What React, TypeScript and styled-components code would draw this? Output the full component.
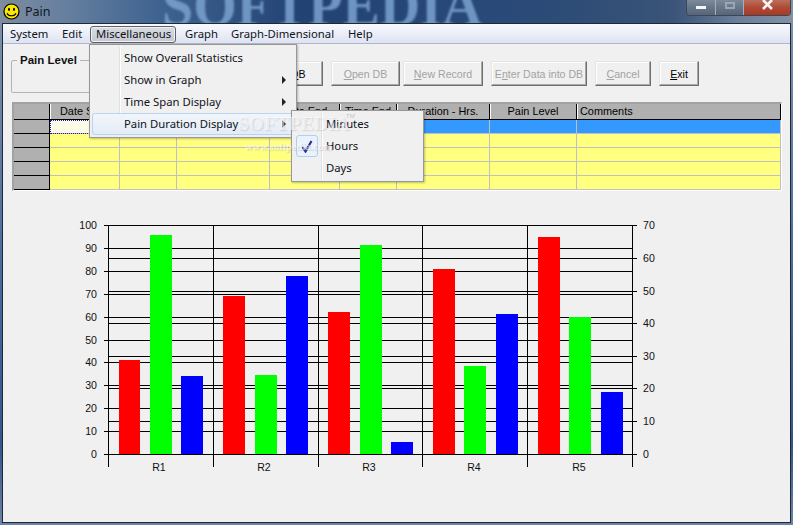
import React from "react";
import styled, { createGlobalStyle } from "styled-components";

const Global = createGlobalStyle`
  html, body { margin: 0; padding: 0; background: #f0f0f0; }
  #root { width: 793px; height: 525px; }
`;

const uiFont = `"Noto Sans", "Liberation Sans", sans-serif`;
const ctlFont = `"Liberation Sans", Arial, sans-serif`;

const Win = styled.div`
  position: relative;
  width: 793px;
  height: 525px;
  overflow: hidden;
  display: flex;
  flex-direction: column;
  background: linear-gradient(180deg, #8094ac 0%, #4f6f9e 45%, #34568a 85%, #6d84a6 100%);
`;

const TitleBar = styled.div`
  position: relative;
  flex: 0 0 23px;
  height: 23px;
  display: flex;
  align-items: center;
  padding-left: 3px;
  overflow: hidden;
  background: linear-gradient(90deg, #7d8c9f 0%, #66809f 8%, #3f6390 20%, #224273 38%, #28487a 58%, #2d4c76 72%, #3b5478 85%, #6b7f98 93%, #8292a5 100%);
`;

const TitleWatermark = styled.span`
  position: absolute;
  left: 162px;
  top: -26px;
  font: bold 56px "Liberation Serif", serif;
  color: #7ba3cf;
  opacity: 0.85;
  filter: blur(1.2px);
  white-space: nowrap;
`;

const AppIcon = styled.svg`
  position: relative;
  width: 17px;
  height: 17px;
  margin-right: 5px;
`;

const TitleText = styled.span`
  position: relative;
  font: 12.5px ${uiFont};
  color: #10161f;
`;

const WinControls = styled.div`
  position: relative;
  margin-left: auto;
  margin-right: 2px;
  align-self: flex-start;
  display: flex;
  height: 15px;
  border: 1px solid #3b4656;
  border-top: none;
  border-radius: 0 0 4px 4px;
  overflow: hidden;
`;

const CtlBtn = styled.div<{ $w: number; $red?: boolean }>`
  width: ${(p) => p.$w}px;
  display: flex;
  align-items: flex-start;
  justify-content: center;
  border-left: 1px solid #a6b0bd;
  &:first-child { border-left: none; }
  background: ${(p) =>
    p.$red
      ? "linear-gradient(180deg, #b9705f 0%, #b04a34 50%, #a83a24 100%)"
      : "linear-gradient(180deg, #7d8a9b 0%, #667588 50%, #56657a 100%)"};
`;

const MinGlyph = styled.i`
  display: block;
  width: 10px;
  height: 3px;
  margin-top: 6px;
  background: #f4f6f8;
`;

const MaxGlyph = styled.i`
  display: block;
  width: 6px;
  height: 3px;
  margin-top: 2px;
  border: 2px solid #9aa6b4;
`;

const CloseGlyph = styled.svg`
  width: 11px;
  height: 10px;
`;

const Client = styled.div`
  flex: 1;
  margin: 0 2px 2px;
  border: 1px solid #1d2838;
  background: #f0f0f0;
  display: flex;
  flex-direction: column;
  min-height: 0;
`;

const MenuBar = styled.div`
  flex: 0 0 20px;
  box-sizing: border-box;
  display: flex;
  align-items: flex-start;
  padding: 2px 0 0 1px;
  border-bottom: 1px solid #b2b6cc;
  background: linear-gradient(180deg, #f8f9fc 0%, #f0f3fa 30%, #dfe3f2 100%);
`;

const MenuItem = styled.div<{ $w: number; $open?: boolean }>`
  box-sizing: border-box;
  width: ${(p) => p.$w}px;
  height: 17px;
  padding-left: 6px;
  margin-right: ${(p) => (p.$open ? 3 : 0)}px;
  font: 11.3px/16px ${uiFont};
  color: #10131a;
  white-space: nowrap;
  ${(p) =>
    p.$open
      ? `border: 1px solid #5d6068; border-radius: 3px; padding-left: 5px; line-height: 14px;
         background: linear-gradient(180deg, #d9dbe2, #c6c8d0);
         box-shadow: inset 0 0 0 1px #eef0f4;`
      : ""}
`;

const Toolbar = styled.div`
  flex: 0 0 58px;
  display: flex;
  align-items: flex-start;
  padding: 16px 0 0 8px;
  box-sizing: border-box;
`;

const GroupBox = styled.fieldset`
  box-sizing: border-box;
  width: 241px;
  height: 33px;
  margin: 0;
  padding: 0;
  border: 1px solid #b4b4b4;
  border-radius: 2px;
  position: relative;
`;

const GroupLabel = styled.span`
  position: absolute;
  left: 5px;
  top: -8px;
  padding: 0 3px;
  background: #f0f0f0;
  font: bold 11.5px/14px ${ctlFont};
  color: #111;
`;

const ButtonRow = styled.div`
  display: flex;
  margin-top: 1px;
`;

const Btn = styled.div<{ $w: number; $gap: number; $off?: boolean }>`
  box-sizing: border-box;
  width: ${(p) => p.$w}px;
  height: 25px;
  margin-left: ${(p) => p.$gap}px;
  display: flex;
  align-items: center;
  justify-content: center;
  white-space: nowrap;
  font: 10.6px ${ctlFont};
  color: ${(p) => (p.$off ? "#a2a2a2" : "#000")};
  background: #f0f0f0;
  border-top: 1px solid #e4e4e4;
  border-left: 1px solid #e4e4e4;
  border-right: 1px solid #6e6e6e;
  border-bottom: 1px solid #6e6e6e;
  box-shadow: inset -1px -1px 0 #a8a8a8, inset 1px 1px 0 #fff;
`;

const COLS = "36px 70px 57px 93px 70px 57px 93px 87px 1fr";

const DataGrid = styled.div`
  flex: 0 0 auto;
  margin-left: 9px;
  width: 770px;
  box-sizing: border-box;
  border-top: 2px solid #a2a2a2;
  border-left: 2px solid #a2a2a2;
  border-right: 1px solid #fff;
  border-bottom: 1px solid #fff;
  display: grid;
  grid-template-columns: ${COLS};
  grid-auto-rows: 14px;
  grid-template-rows: 16px;
  height: 89px;
`;

const HeadCell = styled.div<{ $left?: boolean }>`
  box-sizing: border-box;
  background: #b0b0b0;
  border-bottom: 1px solid #000;
  border-right: 1px solid #000;
  box-shadow: inset 1px 0 0 #fff;
  font: 10.9px/15px ${ctlFont};
  color: #000;
  white-space: nowrap;
  overflow: hidden;
  text-align: ${(p) => (p.$left ? "left" : "center")};
  padding-left: ${(p) => (p.$left ? 3 : 0)}px;
  &:first-child { box-shadow: none; }
  &:last-child { border-right: none; }
`;

const RowHead = styled.div`
  box-sizing: border-box;
  background: #b0b0b0;
  border-bottom: 1px solid #000;
  border-right: 1px solid #000;
`;

const Cell = styled.div<{ $sel?: boolean; $focus?: boolean }>`
  box-sizing: border-box;
  background: ${(p) => (p.$focus ? "#fbfbe6" : p.$sel ? "#3399ff" : "#ffff80")};
  border-bottom: 1px solid #c0c0c0;
  border-right: 1px solid #c0c0c0;
  ${(p) => (p.$focus ? "outline: 1px dotted #1a1ab0; outline-offset: -1px;" : "")}
`;

const ChartSvg = styled.svg`
  display: block;
  width: 787px;
  height: 320px;
  text {
    font: 10.6px ${ctlFont};
    fill: #111;
  }
`;

const Popup = styled.div<{ $x: number; $y: number; $w: number; $sep: number }>`
  position: absolute;
  left: ${(p) => p.$x}px;
  top: ${(p) => p.$y}px;
  width: ${(p) => p.$w}px;
  box-sizing: border-box;
  padding: 2px;
  background: #f0f0f0;
  border: 1px solid #979797;
  box-shadow: 1px 1px 2px rgba(0, 0, 0, 0.25);
  &::before {
    content: "";
    position: absolute;
    top: 2px;
    bottom: 2px;
    left: ${(p) => p.$sep}px;
    width: 1px;
    background: #e0e0e0;
    box-shadow: 1px 0 0 #fff;
  }
`;

const PopItem = styled.div<{ $pad: number; $hot?: boolean }>`
  position: relative;
  box-sizing: border-box;
  height: 22px;
  padding-left: ${(p) => p.$pad}px;
  font: 11.3px/21px ${uiFont};
  color: #10131a;
  white-space: nowrap;
  border-radius: 3px;
  ${(p) =>
    p.$hot
      ? `background: linear-gradient(180deg, #f2f6fb, #e2ebf6); box-shadow: inset 0 0 0 1px #b9d3f2;`
      : ""}
`;

const Arrow = styled.i`
  position: absolute;
  right: 8px;
  top: 7px;
  width: 0;
  height: 0;
  border-left: 4px solid #222;
  border-top: 4px solid transparent;
  border-bottom: 4px solid transparent;
`;

const CheckBox = styled.span`
  position: absolute;
  left: 2px;
  top: 0;
  width: 22px;
  height: 22px;
  box-sizing: border-box;
  display: flex;
  align-items: center;
  justify-content: center;
  border: 1px solid #aecff7;
  border-radius: 3px;
  background: #eaf2fb;
`;

const WmBig = styled.span`
  position: absolute;
  left: 238px;
  top: 113px;
  font: bold 19.5px "Liberation Serif", serif;
  color: rgba(255, 255, 255, 0.55);
  text-shadow: 1px 1px 1px rgba(120, 120, 120, 0.22);
  white-space: nowrap;
  pointer-events: none;
`;

const WmTm = styled.span`
  position: absolute;
  left: 346px;
  top: 113px;
  font: 6px "Liberation Sans", sans-serif;
  color: rgba(170, 170, 170, 0.7);
  pointer-events: none;
`;

const WmSmall = styled.span`
  position: absolute;
  left: 245px;
  top: 141px;
  font: bold 10.5px "Liberation Serif", serif;
  color: rgba(255, 255, 255, 0.6);
  text-shadow: 1px 1px 1px rgba(120, 120, 120, 0.25);
  white-space: nowrap;
  pointer-events: none;
`;

const menus = [
  { t: "System", w: 52 },
  { t: "Edit", w: 34 },
  { t: "Miscellaneous", w: 86, open: true },
  { t: "Graph", w: 46 },
  { t: "Graph-Dimensional", w: 117 },
  { t: "Help", w: 40 },
];

const heads = ["Date Start", "Time Start", "", "Date End", "Time End", "Duration - Hrs.", "Pain Level"];

const leftY = [225, 248, 271, 294, 317, 340, 362, 385, 408, 431, 454];
const rightY = [258, 291, 323, 356, 388, 421];
const rightLabels = [
  { v: 70, y: 225 },
  { v: 60, y: 258 },
  { v: 50, y: 291 },
  { v: 40, y: 323 },
  { v: 30, y: 356 },
  { v: 20, y: 388 },
  { v: 10, y: 421 },
  { v: 0, y: 454 },
];
const vLines = [108, 213, 318, 422, 527, 632];
const bars = [
  { x: 119, w: 21, y: 360, c: "#ff0000" },
  { x: 150, w: 22, y: 235, c: "#00ff00" },
  { x: 181, w: 22, y: 376, c: "#0000ff" },
  { x: 223, w: 22, y: 296, c: "#ff0000" },
  { x: 255, w: 22, y: 375, c: "#00ff00" },
  { x: 286, w: 22, y: 276, c: "#0000ff" },
  { x: 328, w: 22, y: 312, c: "#ff0000" },
  { x: 360, w: 22, y: 245, c: "#00ff00" },
  { x: 391, w: 22, y: 442, c: "#0000ff" },
  { x: 433, w: 22, y: 269, c: "#ff0000" },
  { x: 464, w: 22, y: 366, c: "#00ff00" },
  { x: 496, w: 22, y: 314, c: "#0000ff" },
  { x: 538, w: 22, y: 237, c: "#ff0000" },
  { x: 569, w: 22, y: 317, c: "#00ff00" },
  { x: 601, w: 22, y: 392, c: "#0000ff" },
];
const cats = ["R1", "R2", "R3", "R4", "R5"];

export default function App() {
  return (
    <Win>
      <Global />
      <TitleBar>
        <TitleWatermark>SOFTPEDIA</TitleWatermark>
        <AppIcon viewBox="0 0 17 17">
          <circle cx="8.5" cy="8.5" r="7.5" fill="#ffe800" stroke="#000" strokeWidth="1.2" />
          <ellipse cx="6" cy="6.3" rx="1" ry="1.6" fill="#000" />
          <ellipse cx="11" cy="6.3" rx="1" ry="1.6" fill="#000" />
          <path d="M4 10.2 C5.5 13.6 11.5 13.6 13 10.2" fill="none" stroke="#000" strokeWidth="1.2" />
        </AppIcon>
        <TitleText>Pain</TitleText>
        <WinControls>
          <CtlBtn $w={28}><MinGlyph /></CtlBtn>
          <CtlBtn $w={27}><MaxGlyph /></CtlBtn>
          <CtlBtn $w={46} $red>
            <CloseGlyph viewBox="0 0 11 10">
              <path d="M1 0 L10 9 M10 0 L1 9" stroke="#f4f4f4" strokeWidth="2.6" />
            </CloseGlyph>
          </CtlBtn>
        </WinControls>
      </TitleBar>

      <Client>
        <MenuBar>
          {menus.map((m) => (
            <MenuItem key={m.t} $w={m.w} $open={m.open}>{m.t}</MenuItem>
          ))}
        </MenuBar>

        <Toolbar>
          <GroupBox>
            <GroupLabel>Pain Level</GroupLabel>
          </GroupBox>
          <ButtonRow>
            <Btn $w={71} $gap={0}>New <u>D</u>B</Btn>
            <Btn $w={69} $gap={8} $off><u>O</u>pen DB</Btn>
            <Btn $w={80} $gap={3} $off><u>N</u>ew Record</Btn>
            <Btn $w={96} $gap={8} $off>E<u>n</u>ter Data into DB</Btn>
            <Btn $w={56} $gap={8} $off><u>C</u>ancel</Btn>
            <Btn $w={40} $gap={8}><u>E</u>xit</Btn>
          </ButtonRow>
        </Toolbar>

        <DataGrid>
          <HeadCell />
          {heads.map((h, i) => (
            <HeadCell key={i}>{h}</HeadCell>
          ))}
          <HeadCell $left>Comments</HeadCell>
          {[0, 1, 2, 3, 4].map((r) => (
            <React.Fragment key={r}>
              <RowHead />
              {[0, 1, 2, 3, 4, 5, 6, 7].map((c) => (
                <Cell key={c} $sel={r === 0} $focus={r === 0 && c === 0} />
              ))}
            </React.Fragment>
          ))}
        </DataGrid>

        <ChartSvg viewBox="3 191 787 320" shapeRendering="crispEdges">
          {leftY.map((y) => (
            <line key={y} x1={104} x2={633} y1={y + 0.5} y2={y + 0.5} stroke="#000" />
          ))}
          {rightY.map((y) => (
            <line key={y} x1={108} x2={633} y1={y + 0.5} y2={y + 0.5} stroke="#000" />
          ))}
          {rightLabels.map((l) => (
            <line key={l.v} x1={633} x2={637} y1={l.y + 0.5} y2={l.y + 0.5} stroke="#000" />
          ))}
          {vLines.map((x) => (
            <line key={x} x1={x + 0.5} x2={x + 0.5} y1={225} y2={467} stroke="#000" />
          ))}
          {bars.map((b, i) => (
            <rect key={i} x={b.x} y={b.y} width={b.w} height={454 - b.y} fill={b.c} />
          ))}
          {[100, 90, 80, 70, 60, 50, 40, 30, 20, 10, 0].map((v, i) => (
            <text key={v} x={97} y={leftY[i] + 4} textAnchor="end">{v}</text>
          ))}
          {rightLabels.map((l) => (
            <text key={l.v} x={643} y={l.y + 4}>{l.v}</text>
          ))}
          {cats.map((c, i) => (
            <text key={c} x={159 + i * 105} y={471} textAnchor="middle">{c}</text>
          ))}
        </ChartSvg>
      </Client>

      <Popup $x={89} $y={44} $w={208} $sep={29}>
        <PopItem $pad={32}>Show Overall Statistics</PopItem>
        <PopItem $pad={32}>Show in Graph<Arrow /></PopItem>
        <PopItem $pad={32}>Time Span Display<Arrow /></PopItem>
        <PopItem $pad={32} $hot>Pain Duration Display<Arrow /></PopItem>
      </Popup>

      <Popup $x={291} $y={110} $w={133} $sep={29}>
        <PopItem $pad={32}>Minutes</PopItem>
        <PopItem $pad={32}>
          <CheckBox>
            <svg width="12" height="13" viewBox="0 0 12 13">
              <path d="M1.5 7 L4.5 11.5 L10.5 1" fill="none" stroke="#2a2f9c" strokeWidth="2.2" />
            </svg>
          </CheckBox>
          Hours
        </PopItem>
        <PopItem $pad={32}>Days</PopItem>
      </Popup>

      <WmBig>SOFTPEDIA</WmBig>
      <WmTm>TM</WmTm>
      <WmSmall>www.softpedia.com</WmSmall>
    </Win>
  );
}
